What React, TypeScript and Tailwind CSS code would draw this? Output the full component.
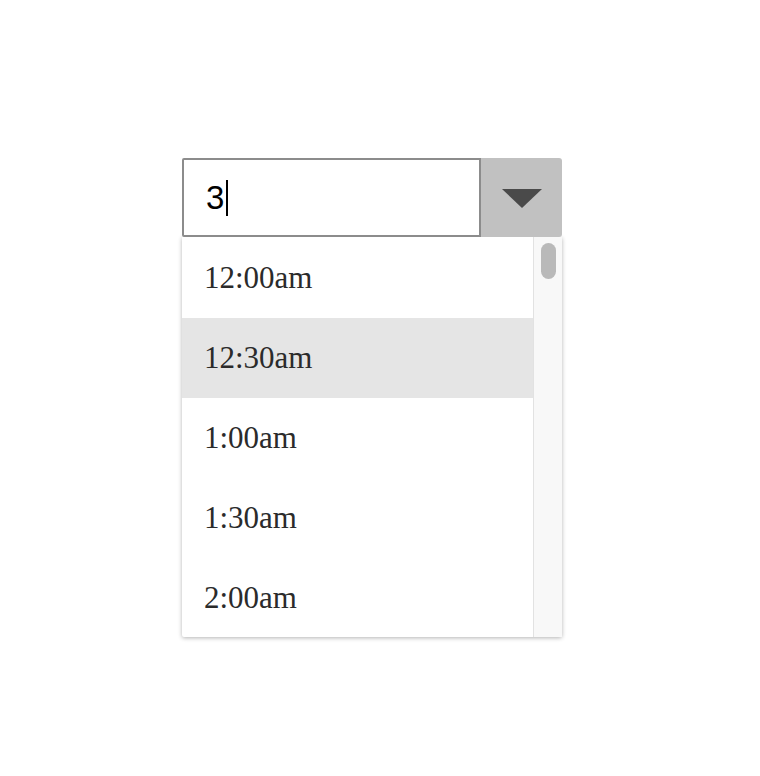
import React from "react";

const times = ["12:00am", "12:30am", "1:00am", "1:30am", "2:00am"];

export default function App() {
  return (
    <div className="w-[760px] h-[776px] bg-white pt-[158px] pl-[182px]">
      <div className="w-[380px]">
        <div className="flex h-[79px]">
          <div className="flex items-center w-[299px] border-2 border-[#8c8c8c] rounded-tl-[2px] rounded-bl-[2px] bg-white pl-[22px]">
            <span className="text-[33px] text-black leading-none" style={{ fontFamily: '"Liberation Sans", Arial, sans-serif' }}>3</span>
            <span className="w-[2px] h-[36px] bg-black ml-[2px]" />
          </div>
          <button className="flex items-center justify-center w-[81px] bg-[#c1c1c1] rounded-tr-[3px] rounded-br-[3px]">
            <svg width="40" height="20" viewBox="0 0 40 20">
              <path d="M0 1 L40 1 L20 20 Z" fill="#4a4a4a" />
            </svg>
          </button>
        </div>
        <div className="flex h-[400px] bg-white shadow-[0_1px_4px_rgba(0,0,0,0.3)] rounded-bl-[2px] rounded-br-[2px]">
          <ul className="flex-1 pt-[1px]">
            {times.map((t, i) => (
              <li
                key={t}
                className={`h-[80px] flex items-center pl-[22px] text-[31px] text-[#2b2b2b] ${i === 1 ? "bg-[#e5e5e5]" : ""}`}
                style={{ fontFamily: '"Liberation Serif", "Times New Roman", serif' }}
              >
                {t}
              </li>
            ))}
          </ul>
          <div className="w-[29px] bg-[#f8f8f8] border-l border-[#e2e2e2] pt-[6px] flex justify-center">
            <div className="w-[15px] h-[36px] rounded-full bg-[#b9b9b9]" />
          </div>
        </div>
      </div>
    </div>
  );
}
